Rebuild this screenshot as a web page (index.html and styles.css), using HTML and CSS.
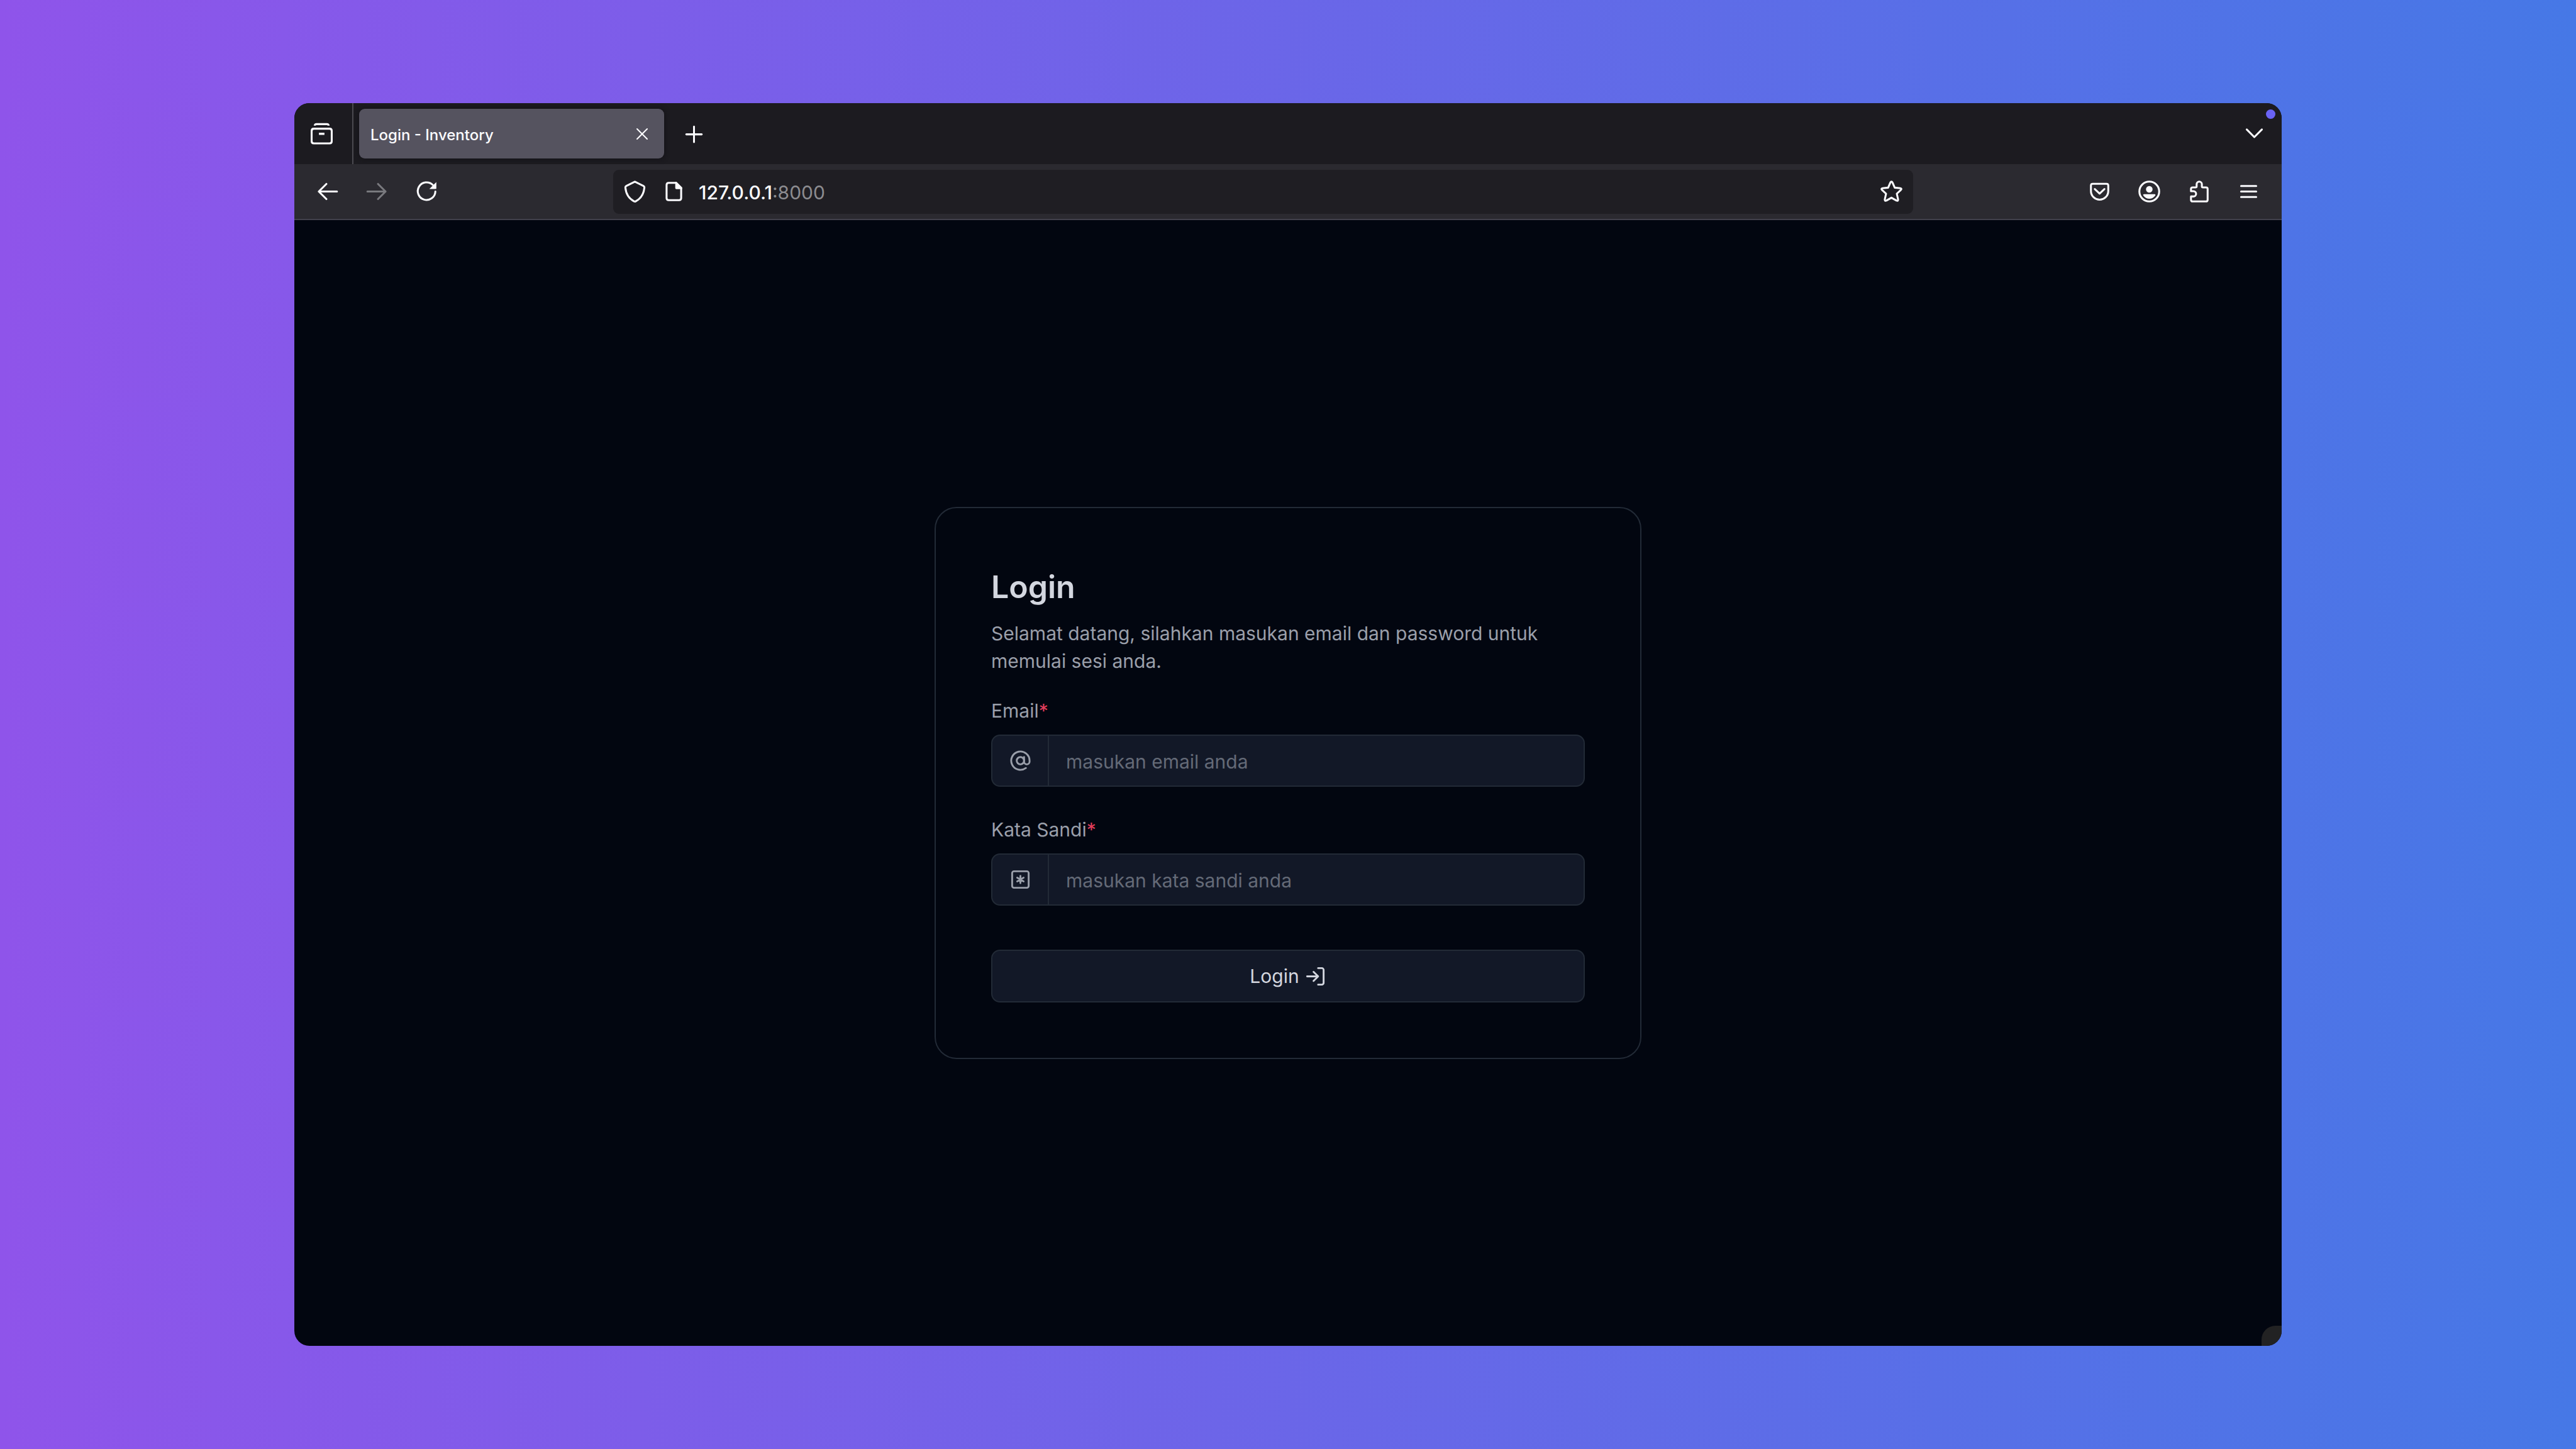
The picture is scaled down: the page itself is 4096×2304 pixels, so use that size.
FILE: index.html
```html
<!DOCTYPE html>
<html lang="id">
<head>
<meta charset="utf-8">
<meta name="viewport" content="width=device-width, initial-scale=1">
<title>Login - Inventory</title>
<link rel="stylesheet" href="styles.css">
</head>
<body>
<div class="window">
  <header class="tabbar">
    <button class="tool view-button" aria-label="Firefox View">
      <svg class="icon" viewBox="0 0 16 16"><path class="solid" d="M2.2 2.2Q2.4.3 4.2.3H11.8Q13.6.3 13.8 2.2H12.4Q12.2 1.8 11.7 1.8H4.3Q3.8 1.8 3.6 2.2ZM6 7.3H10V8.9H6Z"/><path class="solid" fill-rule="evenodd" d="M2.2 3.7H13.8Q16 3.7 16 5.9V13.6Q16 15.8 13.8 15.8H2.2Q0 15.8 0 13.6V5.9Q0 3.7 2.2 3.7ZM2.4 5.1Q1.4 5.1 1.4 6.1V13.4Q1.4 14.4 2.4 14.4H13.6Q14.6 14.4 14.6 13.4V6.1Q14.6 5.1 13.6 5.1Z"/></svg>
    </button>
    <div class="tab">
      <span class="tab-title">Login - Inventory</span>
      <button class="tab-close" aria-label="Close tab"><svg class="icon-small" viewBox="0 0 18 18"><path d="M1 1 17 17M17 1 1 17"/></svg></button>
    </div>
    <button class="tool" aria-label="New tab"><svg class="icon" viewBox="0 0 16 16"><path d="M8 2.9V14.1M2.4 8.5H13.6"/></svg></button>
    <button class="tool list-tabs" aria-label="List all tabs"><svg class="icon" viewBox="0 0 16 16"><path d="M2.5 5 8 10.5 13.5 5"/></svg></button>
    <span class="dot"></span>
  </header>
  <nav class="toolbar">
    <div class="group">
      <button class="tool" aria-label="Back"><svg class="icon" viewBox="0 0 16 16"><path d="M15 8H1.8M7.3 2.5 1.8 8 7.3 13.5"/></svg></button>
      <button class="tool" aria-label="Forward" disabled><svg class="icon" viewBox="0 0 16 16"><path d="M1 8H14.2M8.7 2.5 14.2 8 8.7 13.5"/></svg></button>
      <button class="tool" aria-label="Reload"><svg class="icon" viewBox="0 0 16 16"><path d="M14.3 8A6.4 6.4 0 1 1 12.4 3.2"/><path class="solid" d="M15 1.1V5.6Q15 6.2 14.4 6.2H9.9Z"/></svg></button>
    </div>
    <div class="urlbar">
      <svg class="icon" viewBox="0 0 16 16"><path d="M8 .9 14.2 3.9Q15 4.3 14.9 5.2C14.5 9.5 12.6 13 8.6 15.1Q8 15.4 7.4 15.1C3.4 13 1.5 9.5 1.1 5.2Q1 4.3 1.8 3.9Z"/></svg>
      <svg class="icon" viewBox="0 0 16 16"><path d="M9.6 1.7H4.2Q2.7 1.7 2.7 3.2V12.8Q2.7 14.3 4.2 14.3H11.8Q13.3 14.3 13.3 12.8V5.4Z"/><path class="solid" d="M9 1H10L14 5V6.3H9.8Q9 6.3 9 5.5Z"/></svg>
      <span class="address">127.0.0.1<span class="port">:8000</span></span>
      <svg class="icon" viewBox="0 0 16 16"><path d="M7.2 1.5Q8 .2 8.8 1.5L10.4 5.2 14.4 5.6Q15.8 5.8 14.8 6.9L11.9 9.6 12.8 13.6Q13 15.2 11.6 14.6L8 12.5 4.4 14.6Q3 15.2 3.2 13.6L4.1 9.6 1.2 6.9Q.2 5.8 1.6 5.6L5.6 5.2Z"/></svg>
    </div>
    <div class="group end">
      <button class="tool" aria-label="Save to Pocket"><svg class="icon" viewBox="0 0 16 16"><path d="M3 2.4H13Q14.3 2.4 14.3 3.7V7.6A6.3 6.3 0 0 1 1.7 7.6V3.7Q1.7 2.4 3 2.4ZM4.5 6.2 8 9.5 11.5 6.2"/></svg></button>
      <button class="tool" aria-label="Account"><svg class="icon" viewBox="0 0 16 16"><circle cx="8" cy="8" r="7.2"/><circle class="solid" cx="8" cy="6.4" r="2.4"/><path class="solid" d="M4.3 9.9H11.7Q12.9 9.9 12.3 11A5.2 5.2 0 0 1 3.7 11Q3.1 9.9 4.3 9.9Z"/></svg></button>
      <button class="tool" aria-label="Extensions"><svg class="icon" viewBox="0 0 16 16"><path d="M3.4 5H5.4Q6.3 5 6.3 4.2V2.7A1.9 1.9 0 0 1 10.1 2.7V4.2Q10.1 5 10.9 5H13.1Q14.3 5 14.3 6.2V14Q14.3 15.2 13.1 15.2H3.4Q2.2 15.2 2.2 14V11.6H4A1.9 1.9 0 0 0 4 7.8H2.2V6.1Q2.2 5 3.4 5Z"/></svg></button>
      <button class="tool" aria-label="Menu"><svg class="icon" viewBox="0 0 16 16"><path d="M2.5 4H13.5M2.5 8H13.5M2.5 12H13.5"/></svg></button>
    </div>
  </nav>
  <main class="page">
    <form class="card">
      <h1>Login</h1>
      <p class="intro">Selamat datang, silahkan masukan email dan password untuk memulai sesi anda.</p>
      <div class="field">
        <label for="email">Email<span class="required">*</span></label>
        <div class="input-group">
          <span class="addon"><svg class="icon" viewBox="0 0 24 24"><circle cx="12" cy="12" r="4"/><path d="M16 8v5a3 3 0 0 0 6 0v-1a10 10 0 1 0-4 8"/></svg></span>
          <input id="email" type="email" placeholder="masukan email anda">
        </div>
      </div>
      <div class="field">
        <label for="password">Kata Sandi<span class="required">*</span></label>
        <div class="input-group">
          <span class="addon"><svg class="icon" viewBox="0 0 24 24"><rect x="3" y="3" width="18" height="18" rx="2"/><path d="M12 8v8M8.5 14l7-4M8.5 10l7 4"/></svg></span>
          <input id="password" type="password" placeholder="masukan kata sandi anda">
        </div>
      </div>
      <button class="submit" type="submit">Login <svg class="icon" viewBox="0 0 24 24"><path d="M15 3h4a2 2 0 0 1 2 2v14a2 2 0 0 1-2 2h-4M10 17l5-5-5-5M15 12H3"/></svg></button>
    </form>
    <span class="corner"></span>
  </main>
</div>
</body>
</html>
```

FILE: styles.css
```css
* { box-sizing: border-box; }

body {
  margin: 0;
  min-height: 100vh;
  display: flex;
  padding: 164px 468px;
  background: linear-gradient(90deg, #8f54ea, #4678e6);
  font-family: Inter, "Liberation Sans", sans-serif;
  font-size: 30px;
}

button {
  margin: 0;
  padding: 0;
  border: 0;
  background: none;
  color: inherit;
  font: inherit;
}

.window {
  position: relative;
  flex: 1;
  display: flex;
  flex-direction: column;
  overflow: hidden;
  border-radius: 24px;
  background: #020610;
  color: #fbfbfe;
}

.icon {
  flex: none;
  display: block;
  width: 35px;
  height: 35px;
  fill: none;
  stroke: currentColor;
  stroke-width: 1.4;
  stroke-linecap: round;
  stroke-linejoin: round;
}

.icon .solid { fill: currentColor; stroke: none; }

.icon-small {
  display: block;
  width: 18px;
  height: 18px;
  fill: none;
  stroke: currentColor;
  stroke-width: 2;
  stroke-linecap: round;
}

.tool {
  display: flex;
  align-items: center;
  justify-content: center;
  width: 79px;
  height: 79px;
}

.tool:disabled { color: #79797e; }

/* Tab strip */
.tabbar {
  display: flex;
  align-items: center;
  height: 97px;
  background: #1c1b20;
}

.view-button {
  width: 94px;
  height: 97px;
  padding-right: 6px;
  border-right: 2px solid #4b4a50;
}

.tab {
  display: flex;
  align-items: center;
  justify-content: space-between;
  width: 485px;
  height: 79px;
  margin: 0 8px 0 9px;
  padding: 0 26px 0 18px;
  border-radius: 9px;
  background: #55535f;
  box-shadow: 0 0 8px #111015;
  font-size: 24px;
  font-weight: 500;
}

.tab-title { padding-top: 4px; }

.list-tabs { margin-left: auto; margin-right: 4px; }

.dot {
  position: absolute;
  top: 10px;
  right: 10px;
  width: 15px;
  height: 15px;
  border-radius: 50%;
  background: #6a63f5;
}

/* Navigation bar */
.toolbar {
  display: grid;
  grid-template-columns: 507px 1fr 586px;
  align-items: center;
  height: 89px;
  border-bottom: 2px solid #41404b;
  background: #2b2a30;
}

.group { display: flex; padding: 0 13px; }
.end { justify-content: flex-end; }

.urlbar {
  display: flex;
  align-items: center;
  gap: 27px;
  height: 70px;
  padding: 0 17px;
  border-radius: 9px;
  background: #1f1e23;
}

.urlbar .icon + .icon { margin-right: -5px; }
.address { flex: 1; padding-top: 2px; font-weight: 500; }
.port { color: #8c8c90; font-weight: 400; }

/* Page */
.page {
  position: relative;
  flex: 1;
  display: flex;
  align-items: center;
  justify-content: center;
}

.corner {
  position: absolute;
  right: 0;
  bottom: 0;
  width: 32px;
  height: 32px;
  border-radius: 22px 0 0 0;
  background: #222223;
}

.card {
  width: 1124px;
  padding: 90px 88px 88px;
  border: 2px solid #222a36;
  border-radius: 35px;
  color: #9a9faa;
  line-height: 44px;
}

h1 {
  margin: 0 0 17px;
  color: #d3d6df;
  font-size: 50px;
  font-weight: 600;
  line-height: 70px;
}

.intro { margin: 0 0 35px; }

.field { margin-bottom: 46px; }
.field + .field { margin-bottom: 70px; }

label { display: block; margin-bottom: 16px; }
.required { color: #e63e5c; }

.input-group {
  display: flex;
  height: 83px;
  overflow: hidden;
  border: 2px solid #222a36;
  border-radius: 14px;
  background: #121827;
}

.addon {
  display: flex;
  align-items: center;
  justify-content: center;
  width: 90px;
  border-right: 2px solid #222a36;
}

.card .icon { stroke-width: 2; }

input {
  flex: 1;
  min-width: 0;
  padding: 2px 27px 0;
  border: 0;
  outline: 0;
  background: transparent;
  color: #d3d6df;
  font: inherit;
}

input::placeholder { color: #646a77; opacity: 1; }

.submit {
  display: flex;
  align-items: center;
  justify-content: center;
  gap: 8px;
  width: 100%;
  height: 84px;
  border: 2px solid #222a36;
  border-radius: 14px;
  background: #121827;
  color: #d3d6df;
}
```
